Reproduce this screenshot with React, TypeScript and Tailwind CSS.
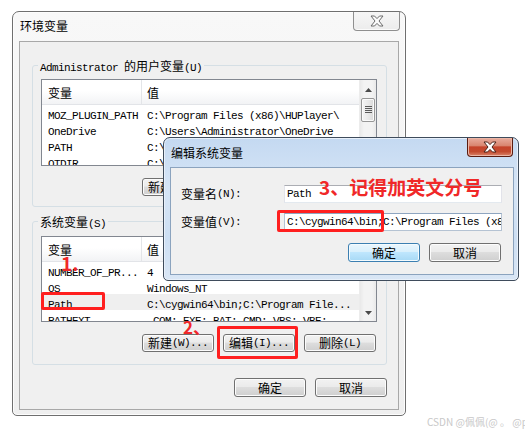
import clsx from "clsx";

/* ================= TEXT ================= */

// SimSun-ish mix: CJK runs at 12px, ASCII runs in a 6px-wide mono
const CJK_RUN = /([\u3000-\u303f\u4e00-\u9fff\uff00-\uffef]+)/;

function T({ s }: { s: string }) {
  const parts = s.split(CJK_RUN);
  return (
    <>
      {parts.map((p, i) =>
        p === "" ? null : i % 2 === 1 ? (
          <span key={i} className="font-['Noto_Sans_CJK_SC',sans-serif] text-[12px]">
            {p}
          </span>
        ) : (
          <span
            key={i}
            className="whitespace-pre font-['Liberation_Mono',monospace] text-[11px] tracking-[-0.6px]"
          >
            {p}
          </span>
        )
      )}
    </>
  );
}

/* ================= PARTS ================= */

function WinButton({ label, primary = false, tall = false }: { label: string; primary?: boolean; tall?: boolean }) {
  return (
    <div
      className={clsx(
        "flex w-[72px] items-center justify-center rounded-[3px] border leading-none text-black",
        tall ? "h-[19px]" : "h-[18px]",
        primary
          ? "border-[#3c7fb1] bg-[linear-gradient(#eaf6fd,#d9f0fc_45%,#bee6fd_50%,#a7d9f5)] shadow-[inset_0_0_0_1px_#f4fbfe]"
          : "border-[#707070] bg-[linear-gradient(#f2f2f2,#ebebeb_45%,#dddddd_50%,#cfcfcf)] shadow-[inset_0_0_0_1px_#fcfcfc]"
      )}
    >
      <T s={label} />
    </div>
  );
}

function XGlyph({ fill, stroke }: { fill: string; stroke: string }) {
  return (
    <svg width="14" height="12" viewBox="0 0 14 12">
      <polygon
        points="1,1 4.5,1 7,3.6 9.5,1 13,1 9,6 13,11 9.5,11 7,8.4 4.5,11 1,11 5,6"
        fill={fill}
        stroke={stroke}
        strokeWidth="1"
        strokeLinejoin="round"
      />
    </svg>
  );
}

function ScrollBar() {
  return (
    <div className="flex w-[17px] flex-col border-l border-[#ececec] bg-[linear-gradient(90deg,#e9e9e9,#f3f3f3_25%,#f3f3f3_75%,#e9e9e9)]">
      <div className="flex h-[17px] items-center justify-center pt-[3px]">
        <svg width="7" height="4">
          <path d="M0 4 L3.5 0 L7 4Z" fill="#4a4a4a" />
        </svg>
      </div>
      <div className="mx-[1px] mt-[1px] flex h-[24px] items-center justify-center rounded-[2px] border border-[#979797] bg-[linear-gradient(90deg,#f4f4f4,#e9e9e9_50%,#dadada)] shadow-[inset_0_0_0_1px_#fafafa]">
        <svg width="7" height="8">
          <path d="M0 0.5H7M0 2.5H7M0 4.5H7M0 6.5H7" stroke="#5a5a5a" strokeWidth="1" />
        </svg>
      </div>
      <div className="flex-1" />
      <div className="flex h-[17px] items-center justify-center">
        <svg width="7" height="4">
          <path d="M0 0 L3.5 4 L7 0Z" fill="#4a4a4a" />
        </svg>
      </div>
    </div>
  );
}

type Row = { name: string; value: string; selected?: boolean };

function VarList({ rows, tall }: { rows: Row[]; tall: boolean }) {
  return (
    <div
      className={clsx(
        "flex w-[336px] overflow-hidden border border-[#828790] bg-white",
        tall ? "h-[87px]" : "h-[86px]"
      )}
    >
      <div className="flex-1 overflow-hidden">
        {/* HEADER */}
        <div className="flex h-[25px] border-b border-[#e2e4e8] bg-[linear-gradient(#ffffff,#ffffff_45%,#f2f3f5)] leading-none">
          <div className="flex w-[100px] items-center border-r border-[#e3e5e8] pl-[6px] pt-[2px]">
            <T s="变量" />
          </div>
          <div className="flex items-center pl-[5px] pt-[2px]">
            <T s="值" />
          </div>
        </div>

        {/* ROWS */}
        {rows.map((row, i) => (
          <div
            key={`${row.name}-${i}`}
            className={clsx("flex h-[16px] items-center leading-none", row.selected && "bg-[#efefef]")}
          >
            <div className="w-[100px] overflow-hidden whitespace-nowrap pl-[6px]">
              <T s={row.name} />
            </div>
            <div className="flex-1 overflow-hidden whitespace-nowrap pl-[5px]">
              <T s={row.value} />
            </div>
          </div>
        ))}
      </div>
      <ScrollBar />
    </div>
  );
}

/* ================= DATA ================= */

const userRows: Row[] = [
  { name: "MOZ_PLUGIN_PATH", value: "C:\\Program Files (x86)\\HUPlayer\\" },
  { name: "OneDrive", value: "C:\\Users\\Administrator\\OneDrive" },
  { name: "PATH", value: "C:\\Users\\Administrator\\AppData" },
  { name: "QTDIR", value: "C:\\Qt\\Qt5.9.0" },
];

const systemRows: Row[] = [
  { name: "NUMBER_OF_PR...", value: "4" },
  { name: "OS", value: "Windows_NT" },
  { name: "Path", value: "C:\\cygwin64\\bin;C:\\Program File...", selected: true },
  { name: "PATHEXT", value: ".COM;.EXE;.BAT;.CMD;.VBS;.VBE;..." },
];

/* ================= UI ================= */

export default function App() {
  return (
    <div className="relative h-[435px] w-[525px] overflow-hidden bg-white text-black">
      {/* ENVIRONMENT VARIABLES WINDOW */}
      <div className="absolute left-[12px] top-[11px] flex h-[405px] w-[394px] flex-col rounded-t-[7px] rounded-b-[5px] border border-[#6f6f6f] bg-[linear-gradient(#f8f8f8,#efefef)] shadow-[inset_0_0_0_1px_#fdfdfd]">
        <div className="flex h-[29px] items-start justify-between">
          <div className="h-[14px] pl-[7px] pt-[6px] leading-[14px]">
            <T s="环境变量" />
          </div>
          <div className="mr-[5px] flex h-[19px] w-[47px] items-center justify-center rounded-b-[4px] border border-t-0 border-[#8f8f8f] bg-[linear-gradient(#f6f6f6,#ececec)] shadow-[inset_0_-1px_0_#fbfbfb]">
            <XGlyph fill="#fbfbfb" stroke="#6b6b6b" />
          </div>
        </div>

        <div className="mx-[6px] h-[369px] border border-[#a8a8a8] bg-[#f0f0f0]">
          {/* USER VARIABLES */}
          <fieldset className="ml-[12px] mt-[16px] w-[355px] rounded-[3px] border border-[#d5dfe5]">
            <legend className="ml-[5px] h-[14px] px-[2px] leading-[14px]">
              <T s="Administrator 的用户变量(U)" />
            </legend>
            <div className="pb-[10px] pl-[8px] pt-[7px]">
              <VarList rows={userRows} tall />
              <div className="mt-[12px] flex justify-end gap-[9px] pr-[10px]">
                <WinButton label="新建(N)..." />
                <WinButton label="编辑(E)..." />
                <WinButton label="删除(D)" />
              </div>
            </div>
          </fieldset>

          {/* SYSTEM VARIABLES */}
          <fieldset className="ml-[12px] mt-[7px] w-[355px] rounded-[3px] border border-[#d5dfe5]">
            <legend className="ml-[5px] h-[14px] px-[2px] leading-[14px]">
              <T s="系统变量(S)" />
            </legend>
            <div className="pb-[12px] pl-[8px] pt-[8px]">
              <VarList rows={systemRows} tall={false} />
              <div className="mt-[12px] flex justify-end gap-[9px] pr-[10px]">
                <WinButton label="新建(W)..." />
                <WinButton label="编辑(I)..." />
                <WinButton label="删除(L)" />
              </div>
            </div>
          </fieldset>

          <div className="mt-[13px] flex justify-end gap-[9px] pr-[11px]">
            <WinButton label="确定" tall />
            <WinButton label="取消" tall />
          </div>
        </div>
      </div>

      {/* EDIT SYSTEM VARIABLE DIALOG */}
      <div className="absolute left-[163px] top-[137px] flex h-[144px] w-[356px] flex-col rounded-t-[7px] rounded-b-[5px] border border-[#3f4c5c] bg-[linear-gradient(#c4d9f1,#d6e5f6_35%,#cddff3_70%,#d9e6f5)] shadow-[inset_0_0_0_1px_#e8f0fa]">
        <div className="flex h-[29px] items-start justify-between">
          <div className="h-[14px] pl-[7px] pt-[7px] leading-[14px]">
            <T s="编辑系统变量" />
          </div>
          <div className="mr-[5px] flex h-[19px] w-[46px] items-center justify-center rounded-b-[4px] border border-t-0 border-[#5a1c10] bg-[linear-gradient(#e9ac9d,#d98670_42%,#c5432a_50%,#c34a2e_75%,#d9856b)] shadow-[inset_0_0_0_1px_#ecb6a6]">
            <XGlyph fill="#ffffff" stroke="#4a2319" />
          </div>
        </div>

        <div className="ml-[6px] h-[108px] w-[344px] border border-[#8ba3be] bg-[#f0f0f0]">
          <div className="flex pt-[17px]">
            <div className="flex h-[18px] w-[113px] items-center pl-[10px] leading-none">
              <T s="变量名(N):" />
            </div>
            <div className="flex h-[18px] w-[218px] items-center overflow-hidden whitespace-nowrap border border-[#e2e3ea] border-t-[#abadb3] border-b-[#e3e9ef] bg-white pl-[2px] leading-none">
              <T s="Path" />
            </div>
          </div>
          <div className="mt-[10px] flex">
            <div className="flex h-[18px] w-[113px] items-center pl-[10px] leading-none">
              <T s="变量值(V):" />
            </div>
            <div className="flex h-[18px] w-[218px] items-center overflow-hidden whitespace-nowrap border border-[#b5c3d3] border-t-[#8ea5c0] bg-white pl-[2px] leading-none">
              <T s="C:\cygwin64\bin;C:\Program Files (x86)\HUPlayer\" />
            </div>
          </div>
          <div className="mt-[12px] flex justify-end gap-[9px] pr-[12px]">
            <WinButton label="确定" primary tall />
            <WinButton label="取消" tall />
          </div>
        </div>
      </div>

      {/* ANNOTATIONS */}
      <div className="absolute left-[41px] top-[292px] h-[18px] w-[64px] rounded-[2px] border-[3px] border-[#ff1f1f]" />
      <div className="absolute left-[217px] top-[326px] h-[33px] w-[81px] rounded-[2px] border-[3px] border-[#ff1f1f]" />
      <div className="absolute left-[277px] top-[210px] h-[22px] w-[107px] rounded-[2px] border-[3px] border-[#ff1f1f]" />

      <div className="absolute left-[61px] top-[253px] font-['Noto_Sans_CJK_SC',sans-serif] text-[19px] font-bold leading-none text-[#f02828]">
        1.
      </div>
      <div className="absolute left-[183px] top-[318px] font-['Noto_Sans_CJK_SC',sans-serif] text-[17px] font-bold leading-none text-[#f02828]">
        2、
      </div>
      <div className="absolute left-[319px] top-[177px] whitespace-nowrap font-['Noto_Sans_CJK_SC',sans-serif] text-[19px] font-bold leading-none text-[#f02828]">
        3、记得加英文分号
      </div>

      {/* WATERMARK */}
      <div className="absolute left-[427px] top-[417px] whitespace-nowrap font-['Noto_Sans_CJK_SC',sans-serif] text-[10px] leading-none text-[#c8c8c8]">
        CSDN @佩佩(@ 。 @p
      </div>
    </div>
  );
}
